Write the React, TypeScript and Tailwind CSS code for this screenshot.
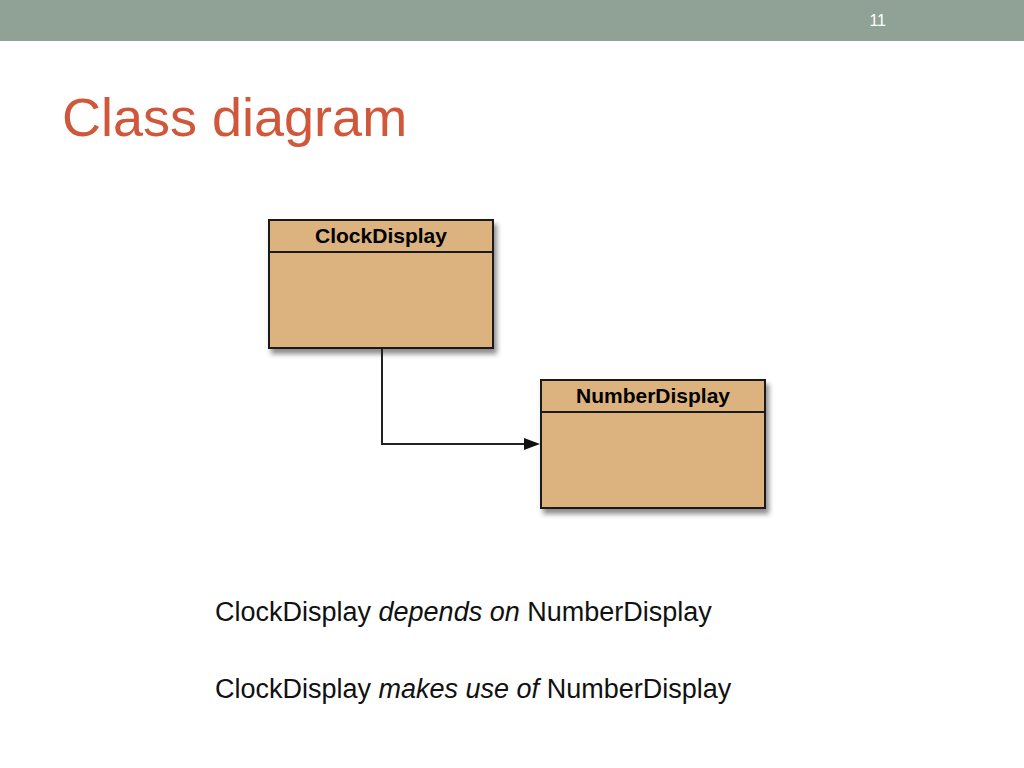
export default function App() {
  const box = "absolute w-[226px] h-[130px] bg-[#dcb27e] border-2 border-[#1a1a1a] shadow-[3px_5px_5px_rgba(0,0,0,0.45)] flex flex-col";
  return (
    <div className="w-[1024px] h-[768px] bg-white flex flex-col overflow-hidden" style={{ fontFamily: '"Liberation Sans", Arial, sans-serif' }}>
      <div className="h-[41px] bg-[#8fa295] flex items-center justify-end pr-[138px]">
        <span className="text-white text-[16px]">11</span>
      </div>
      <div className="pl-[62px] pt-[44px] text-[54px] leading-[64px] text-[#d0573a]">Class diagram</div>
      <div className="relative h-[360px] mt-[65px]">
        <div className={box} style={{ left: 268, top: 5 }}>
          <div className="h-[32px] border-b-2 border-[#1a1a1a] flex items-center justify-center font-bold text-[21px] text-black">ClockDisplay</div>
        </div>
        <div className={box} style={{ left: 540, top: 165 }}>
          <div className="h-[32px] border-b-2 border-[#1a1a1a] flex items-center justify-center font-bold text-[21px] text-black">NumberDisplay</div>
        </div>
        <svg className="absolute left-0 top-0" width="1024" height="360">
          <polyline points="382,135 382,230 526,230" fill="none" stroke="#222" strokeWidth="2" />
          <polygon points="524,224 540,230 524,236" fill="#111" />
        </svg>
      </div>
      <div className="flex flex-col gap-[43px] pl-[215px] mt-[21px] text-[27px] leading-[34px] text-[#111]">
        <div>ClockDisplay <i>depends on</i> NumberDisplay</div>
        <div>ClockDisplay <i>makes use of</i> NumberDisplay</div>
      </div>
    </div>
  );
}
